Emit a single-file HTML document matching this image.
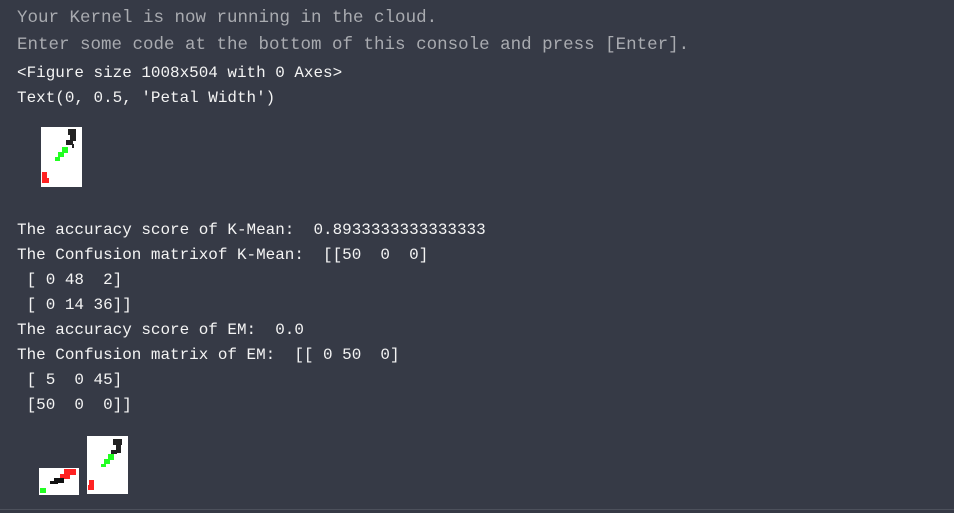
<!DOCTYPE html>
<html><head><style>
body{margin:0;width:954px;height:513px;background:#363a46;overflow:hidden;position:relative;font-family:"Liberation Mono","DejaVu Sans Mono","Courier New",monospace;}
.l{position:absolute;left:17px;white-space:pre;color:#f4f4f4;font-size:15.95px;line-height:20px;}
.g{color:#a9abb0;font-size:17.5px;}
</style></head><body>
<div class="l g" style="top:8px">Your Kernel is now running in the cloud.</div>
<div class="l g" style="top:35px">Enter some code at the bottom of this console and press [Enter].</div>
<div class="l" style="top:63px">&lt;Figure size 1008x504 with 0 Axes&gt;</div>
<div class="l" style="top:88px">Text(0, 0.5, 'Petal Width')</div>
<div class="l" style="top:220px">The accuracy score of K-Mean:  0.8933333333333333</div>
<div class="l" style="top:245px">The Confusion matrixof K-Mean:  [[50  0  0]</div>
<div class="l" style="top:270px"> [ 0 48  2]</div>
<div class="l" style="top:295px"> [ 0 14 36]]</div>
<div class="l" style="top:320px">The accuracy score of EM:  0.0</div>
<div class="l" style="top:345px">The Confusion matrix of EM:  [[ 0 50  0]</div>
<div class="l" style="top:370px"> [ 5  0 45]</div>
<div class="l" style="top:395px"> [50  0  0]]</div>

<svg style="position:absolute;left:0;top:0" width="954" height="513">
<rect x="41" y="127" width="41" height="60" fill="#fff"/>
<g fill="#222"><rect x="68" y="129" width="8" height="6"/><rect x="70" y="135" width="6" height="6"/><rect x="66" y="140" width="7" height="5"/><rect x="72" y="144" width="2" height="4"/></g>
<g fill="#2f2"><rect x="62" y="147" width="6" height="6"/><rect x="58" y="152" width="6" height="5"/><rect x="55" y="157" width="5" height="4"/></g>
<g fill="#f22"><rect x="42" y="172" width="5" height="6"/><rect x="42" y="178" width="7" height="5"/></g>

<rect x="39" y="468" width="40" height="27" fill="#fff"/>
<g fill="#f22"><rect x="64" y="469" width="12" height="6"/><rect x="60" y="474" width="10" height="5"/></g>
<g fill="#111"><rect x="54" y="478" width="10" height="5"/><rect x="50" y="481" width="8" height="3"/></g>
<g fill="#2f2"><rect x="40" y="488" width="6" height="5"/></g>

<rect x="87" y="436" width="41" height="58" fill="#fff"/>
<g fill="#222"><rect x="113" y="439" width="9" height="6"/><rect x="116" y="445" width="5" height="8"/><rect x="111" y="450" width="6" height="4"/></g>
<g fill="#2f2"><rect x="108" y="454" width="6" height="6"/><rect x="104" y="459" width="6" height="5"/><rect x="101" y="464" width="5" height="3"/></g>
<g fill="#f22"><rect x="89" y="480" width="5" height="5"/><rect x="88" y="485" width="6" height="5"/></g>
<rect x="0" y="509" width="954" height="1" fill="#4c505b"/>
</svg>
</body></html>
